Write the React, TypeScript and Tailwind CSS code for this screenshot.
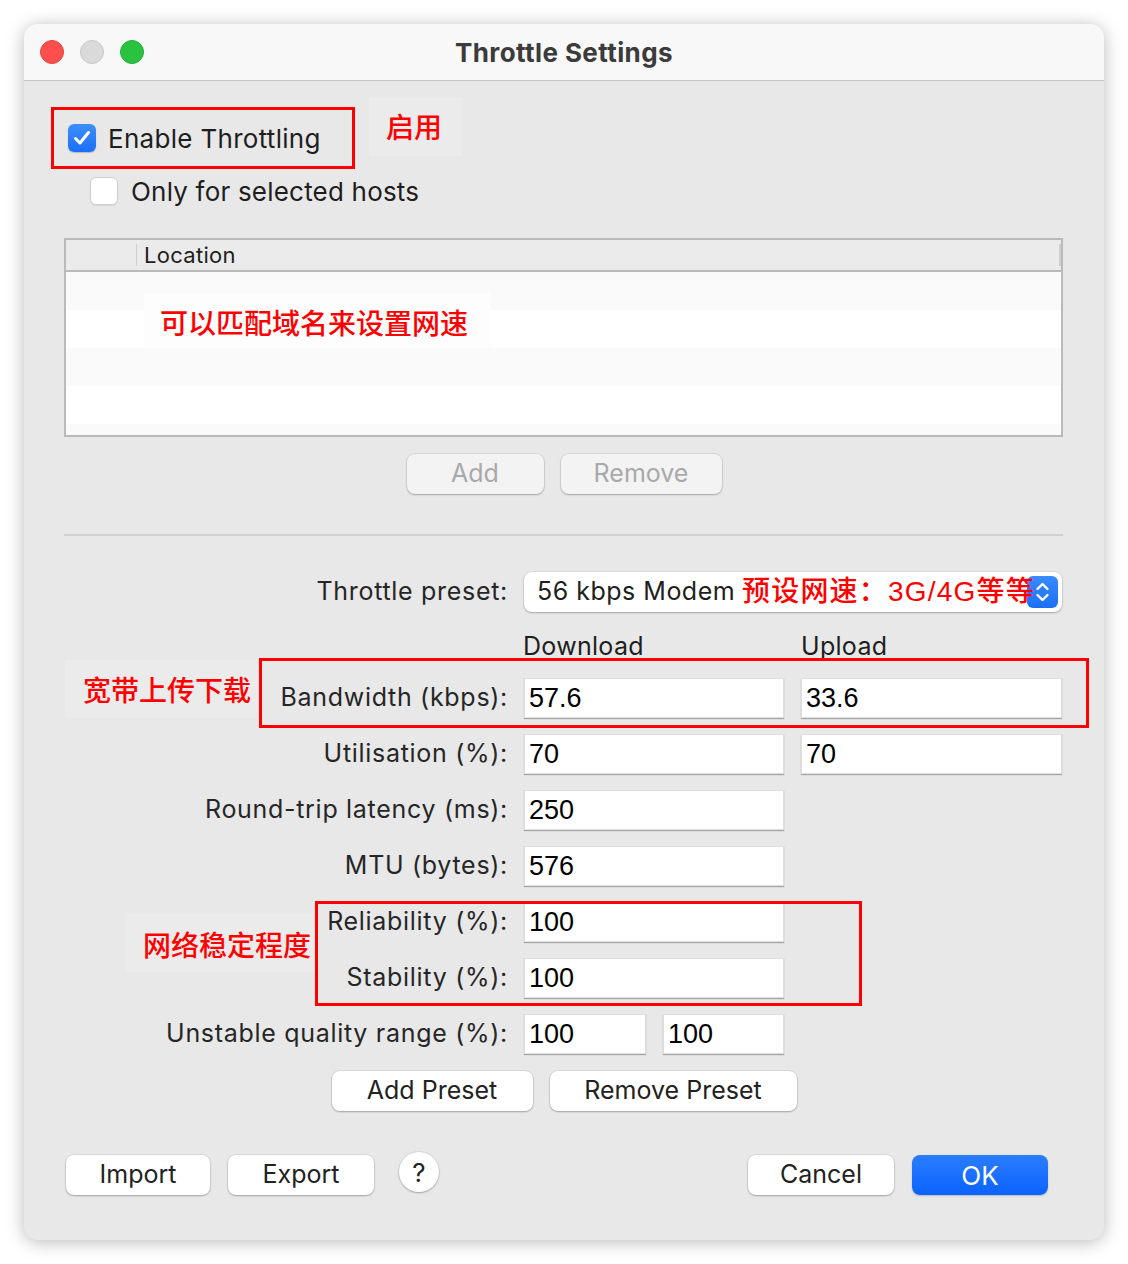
import React from "react";

const sans = "font-['Inter','Noto_Sans_CJK_SC',sans-serif]";
const cjk = "font-['Liberation_Sans','Noto_Sans_CJK_SC',sans-serif] font-medium";
const mono = "font-['Liberation_Sans','Noto_Sans_CJK_SC',sans-serif]";

function Field({ value, width }: { value: string; width: string }) {
  return (
    <div
      className={`${width} h-[40px] bg-white border border-[#dedede] shadow-[0_1px_1px_rgba(0,0,0,0.28)] flex items-center pl-[4px] text-[27px] text-black ${mono}`}
    >
      {value}
    </div>
  );
}

function Row({ label, children }: { label: string; children: React.ReactNode }) {
  return (
    <div className="flex items-center h-[40px]">
      <div className="w-[444px] text-right text-[25px] tracking-[0.7px] text-[#262626]">{label}</div>
      <div className="ml-[16px] flex gap-[17px]">{children}</div>
    </div>
  );
}

function MacButton({ label, w, disabled = false, primary = false }: { label: string; w: string; disabled?: boolean; primary?: boolean }) {
  if (primary) {
    return (
      <button className={`${w} h-[40px] rounded-[8px] bg-gradient-to-b from-[#2a7dff] to-[#0a62ff] text-white text-[26px] shadow-[0_1px_2px_rgba(0,0,0,0.2)]`}>
        {label}
      </button>
    );
  }
  return (
    <button
      className={`${w} h-[40px] rounded-[8px] text-[25px] shadow-[0_0_0_1px_rgba(0,0,0,0.06),0_1px_2px_rgba(0,0,0,0.25)] ${
        disabled ? "bg-[#f3f3f3] text-[#a9a9a9]" : "bg-white text-[#222]"
      }`}
    >
      {label}
    </button>
  );
}

export default function App() {
  return (
    <div className={`w-[1128px] h-[1264px] bg-white p-[24px] ${sans}`}>
      <div className="relative w-[1080px] h-[1216px] rounded-[14px] bg-[#e8e8e8] shadow-[0_2px_18px_rgba(0,0,0,0.28)] overflow-hidden">
        {/* title bar */}
        <div className="relative h-[57px] bg-[#f8f8f8] border-b border-[#c8c8c8] flex items-center pl-[16px] gap-[16px]">
          <span className="w-[24px] h-[24px] rounded-full bg-[#fe4f4c] border border-[#e0443f]" />
          <span className="w-[24px] h-[24px] rounded-full bg-[#dadada] border border-[#c8c8c8]" />
          <span className="w-[24px] h-[24px] rounded-full bg-[#29c33f] border border-[#22ad35]" />
          <div className="absolute inset-0 flex items-center justify-center text-[26px] tracking-[0.4px] font-bold text-[#3b3b3b] pointer-events-none">
            Throttle Settings
          </div>
        </div>

        <div className="px-[40px]">
          {/* enable */}
          <div className="mt-[43px] ml-[4px] h-[28px] flex items-center gap-[12px]">
            <span className="w-[28px] h-[28px] rounded-[6px] bg-gradient-to-b from-[#3d8ffc] to-[#1b6ff5] flex items-center justify-center shadow-[0_1px_1px_rgba(0,0,0,0.2)]">
              <svg width="18" height="16" viewBox="0 0 18 16">
                <path d="M2.5 8.5 L7 13 L15.5 2.5" fill="none" stroke="white" strokeWidth="3" strokeLinecap="round" strokeLinejoin="round" />
              </svg>
            </span>
            <span className="text-[26px] tracking-[0.3px] text-[#1e1e1e]">Enable Throttling</span>
          </div>

          <div className="mt-[25px] ml-[26px] h-[28px] flex items-center gap-[13px]">
            <span className="w-[28px] h-[28px] rounded-[6px] bg-white border border-[#cfcfcf] shadow-[0_1px_1px_rgba(0,0,0,0.08)]" />
            <span className="text-[26px] tracking-[0.2px] text-[#1e1e1e]">Only for selected hosts</span>
          </div>

          {/* hosts table */}
          <div className="mt-[33px] w-[999px] h-[199px] border-2 border-[#bababa] bg-white flex flex-col">
            <div className="h-[32px] bg-[#ebebeb] border-b-2 border-[#bababa] flex items-center">
              <div className="w-[70px]" />
              <div className="w-[1px] h-[22px] bg-[#cfcfcf]" />
              <div className="pl-[7px] text-[22px] tracking-[0.3px] text-[#1e1e1e] flex-1">Location</div>
              <div className="w-[2px] h-[22px] bg-[#cfcfcf]" />
            </div>
            <div className="h-[38px] bg-[#fafafa]" />
            <div className="h-[38px] bg-white" />
            <div className="h-[38px] bg-[#fafafa]" />
            <div className="h-[38px] bg-white" />
            <div className="flex-1 bg-[#fafafa]" />
          </div>

          <div className="mt-[17px] flex justify-center gap-[17px]">
            <MacButton label="Add" w="w-[137px]" disabled />
            <MacButton label="Remove" w="w-[161px]" disabled />
          </div>

          <div className="mt-[40px] h-[2px] w-[999px] bg-[#d0d0d0]" />

          {/* form */}
          <div className="mt-[36px]">
            <Row label="Throttle preset:">
              <div className="w-[538px] h-[40px] rounded-[8px] bg-white shadow-[0_0_0_1px_rgba(0,0,0,0.05),0_1px_2px_rgba(0,0,0,0.25)] flex items-center pl-[13px] pr-[4px]">
                <span className="flex-1 text-[25px] tracking-[0.5px] text-[#1e1e1e]">56 kbps Modem</span>
                <span className="w-[31px] h-[32px] rounded-[6px] bg-gradient-to-b from-[#3a8bfd] to-[#1a6ff6] flex items-center justify-center">
                  <svg width="31" height="32" viewBox="0 0 31 32">
                    <path d="M10.5 13 L15.5 8 L20.5 13" fill="none" stroke="white" strokeWidth="2.4" strokeLinecap="round" strokeLinejoin="round" />
                    <path d="M10.5 19 L15.5 24 L20.5 19" fill="none" stroke="white" strokeWidth="2.4" strokeLinecap="round" strokeLinejoin="round" />
                  </svg>
                </span>
              </div>
            </Row>

            <div className="mt-[22px] h-[26px] flex items-center text-[25px] tracking-[0.3px] text-[#1e1e1e]">
              <div className="w-[459px]" />
              <div className="w-[278px]">Download</div>
              <div>Upload</div>
            </div>

            <div className="mt-[18px] flex flex-col gap-[16px]">
              <Row label="Bandwidth (kbps):">
                <Field value="57.6" width="w-[260px]" />
                <Field value="33.6" width="w-[261px]" />
              </Row>
              <Row label="Utilisation (%):">
                <Field value="70" width="w-[260px]" />
                <Field value="70" width="w-[261px]" />
              </Row>
              <Row label="Round-trip latency (ms):">
                <Field value="250" width="w-[260px]" />
              </Row>
              <Row label="MTU (bytes):">
                <Field value="576" width="w-[260px]" />
              </Row>
              <Row label="Reliability (%):">
                <Field value="100" width="w-[260px]" />
              </Row>
              <Row label="Stability (%):">
                <Field value="100" width="w-[260px]" />
              </Row>
              <Row label="Unstable quality range (%):">
                <Field value="100" width="w-[122px]" />
                <Field value="100" width="w-[121px]" />
              </Row>
            </div>

            <div className="mt-[17px] flex justify-center gap-[17px]">
              <MacButton label="Add Preset" w="w-[201px]" />
              <MacButton label="Remove Preset" w="w-[247px]" />
            </div>
          </div>
        </div>

        {/* bottom buttons */}
        <div className="mt-[44px] pl-[42px] pr-[56px] flex items-center">
          <MacButton label="Import" w="w-[144px]" />
          <div className="w-[18px]" />
          <MacButton label="Export" w="w-[146px]" />
          <div className="w-[25px]" />
          <button className="w-[40px] h-[40px] -mt-[6px] rounded-full bg-white text-[26px] text-[#222] shadow-[0_0_0_1px_rgba(0,0,0,0.06),0_1px_2px_rgba(0,0,0,0.25)]">
            ?
          </button>
          <div className="flex-1" />
          <MacButton label="Cancel" w="w-[146px]" />
          <div className="w-[18px]" />
          <MacButton label="OK" w="w-[136px]" primary />
        </div>

        {/* annotations drawn over the dialog */}
        <div className="absolute left-[27px] top-[83px] w-[304px] h-[62px] border-[3px] border-[#ff0000] pointer-events-none" />
        <div className={`absolute left-[345px] top-[73px] w-[93px] h-[59px] bg-[#ebebeb] flex items-center pl-[17px] pt-[4px] text-[28px] text-[#ff0000] ${cjk}`}>
          启用
        </div>

        <div className={`absolute left-[120px] top-[269px] w-[346px] h-[55px] bg-[#fdfdfd] flex items-center pl-[16px] pt-[8px] text-[28px] text-[#ff0000] ${cjk}`}>
          可以匹配域名来设置网速
        </div>

        <div className={`absolute left-[718px] top-[548px] h-[40px] flex items-center text-[28px] tracking-[1.2px] text-[#ff0000] ${cjk}`}>
          预设网速：3G/4G等等
        </div>

        <div className="absolute left-[235px] top-[634px] w-[830px] h-[70px] border-[3px] border-[#ff0000] pointer-events-none" />
        <div className={`absolute left-[41px] top-[636px] w-[192px] h-[58px] bg-[#ebebeb] flex items-center pl-[18px] pt-[6px] text-[28px] text-[#ff0000] ${cjk}`}>
          宽带上传下载
        </div>

        <div className="absolute left-[291px] top-[877px] w-[547px] h-[105px] border-[3px] border-[#ff0000] pointer-events-none" />
        <div className={`absolute left-[101px] top-[889px] w-[190px] h-[59px] bg-[#ebebeb] flex items-center pl-[18px] pt-[8px] text-[28px] text-[#ff0000] ${cjk}`}>
          网络稳定程度
        </div>
      </div>
    </div>
  );
}
